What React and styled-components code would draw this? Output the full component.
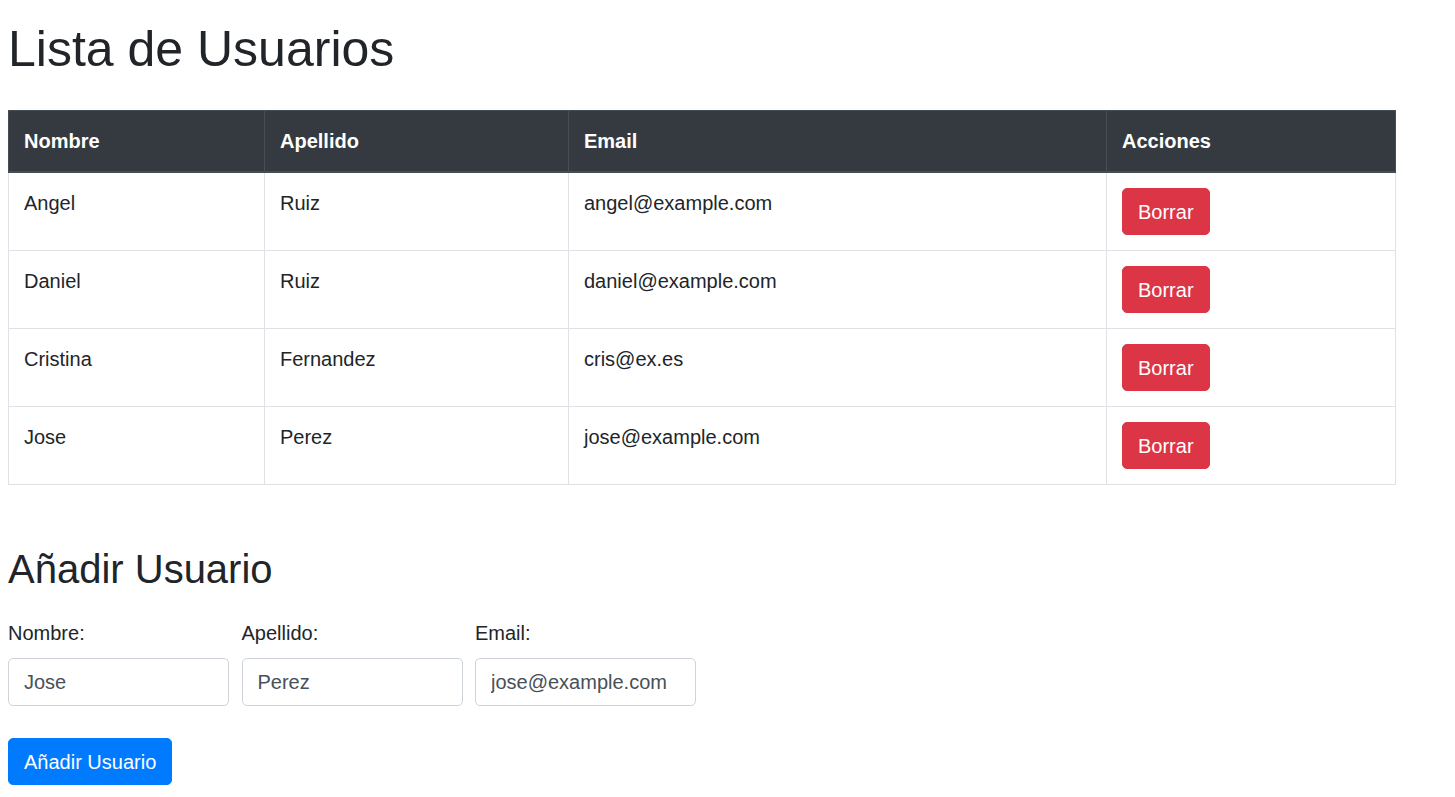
import { useState } from "react";
import styled, { createGlobalStyle } from "styled-components";

const GlobalStyle = createGlobalStyle`
  body {
    margin: 0;
    background: #fff;
    color: #212529;
    font-family: "Liberation Sans", Arial, sans-serif;
    font-size: 20px;
    line-height: 1.5;
  }
  * {
    box-sizing: border-box;
  }
`;

const Page = styled.div`
  padding: 19px 8px 10px;
`;

const Title = styled.h1`
  margin: 0 0 31px;
  font-size: 50px;
  font-weight: 400;
  line-height: 1.2;
`;

const Table = styled.table`
  width: 1387px;
  border-collapse: collapse;
  table-layout: fixed;
  margin-bottom: 60px;
`;

const Th = styled.th`
  padding: 15px;
  text-align: left;
  font-weight: 700;
  color: #fff;
  background: #343a40;
  border: 1px solid #454d55;
  border-bottom-width: 2px;
  vertical-align: bottom;
`;

const Td = styled.td`
  padding: 15px;
  border: 1px solid #dee2e6;
  vertical-align: top;
`;

const Button = styled.button`
  display: inline-block;
  font-family: inherit;
  font-size: 20px;
  line-height: 1.5;
  padding: 7.5px 15px;
  border: 1px solid ${(p) => p.$bg};
  border-radius: 5px;
  color: #fff;
  background: ${(p) => p.$bg};
  cursor: pointer;
`;

const SubTitle = styled.h2`
  margin: 0 0 25px;
  font-size: 40px;
  font-weight: 400;
  line-height: 1.2;
`;

const FormRow = styled.div`
  display: flex;
  gap: 12.5px;
  margin-bottom: 32px;
`;

const Group = styled.div`
  display: flex;
  flex-direction: column;
  width: 221px;
`;

const Label = styled.label`
  margin-bottom: 10px;
`;

const Input = styled.input`
  width: 100%;
  height: 48px;
  padding: 7.5px 15px;
  font-family: inherit;
  font-size: 20px;
  line-height: 1.5;
  color: #495057;
  background: #fff;
  border: 1px solid #ced4da;
  border-radius: 5px;
  outline: none;
`;

const initialUsers = [
  { nombre: "Angel", apellido: "Ruiz", email: "angel@example.com" },
  { nombre: "Daniel", apellido: "Ruiz", email: "daniel@example.com" },
  { nombre: "Cristina", apellido: "Fernandez", email: "cris@ex.es" },
  { nombre: "Jose", apellido: "Perez", email: "jose@example.com" },
];

const App = () => {
  const [users, setUsers] = useState(initialUsers);
  const [form, setForm] = useState({
    nombre: "Jose",
    apellido: "Perez",
    email: "jose@example.com",
  });

  const update = (key) => (e) => setForm({ ...form, [key]: e.target.value });

  return (
    <Page>
      <GlobalStyle />
      <Title>Lista de Usuarios</Title>
      <Table>
        <colgroup>
          <col style={{ width: 256 }} />
          <col style={{ width: 304 }} />
          <col style={{ width: 538 }} />
          <col style={{ width: 289 }} />
        </colgroup>
        <thead>
          <tr>
            <Th>Nombre</Th>
            <Th>Apellido</Th>
            <Th>Email</Th>
            <Th>Acciones</Th>
          </tr>
        </thead>
        <tbody>
          {users.map((u, i) => (
            <tr key={i}>
              <Td>{u.nombre}</Td>
              <Td>{u.apellido}</Td>
              <Td>{u.email}</Td>
              <Td>
                <Button
                  $bg="#dc3545"
                  onClick={() => setUsers(users.filter((_, j) => j !== i))}
                >
                  Borrar
                </Button>
              </Td>
            </tr>
          ))}
        </tbody>
      </Table>

      <SubTitle>Añadir Usuario</SubTitle>
      <FormRow>
        <Group>
          <Label>Nombre:</Label>
          <Input value={form.nombre} onChange={update("nombre")} />
        </Group>
        <Group>
          <Label>Apellido:</Label>
          <Input value={form.apellido} onChange={update("apellido")} />
        </Group>
        <Group>
          <Label>Email:</Label>
          <Input value={form.email} onChange={update("email")} />
        </Group>
      </FormRow>
      <Button $bg="#007bff" onClick={() => setUsers([...users, form])}>
        Añadir Usuario
      </Button>
    </Page>
  );
};

export default App;
